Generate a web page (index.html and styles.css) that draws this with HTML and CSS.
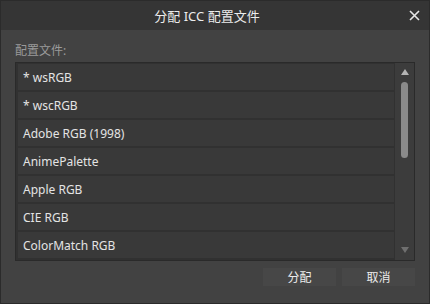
FILE: index.html
```html
<!DOCTYPE html>
<html lang="zh-CN">
<head>
    <meta charset="UTF-8">
    <title>分配 ICC 配置文件</title>
    <link rel="stylesheet" href="styles.css">
</head>
<body>
    <div class="dialog">
        <header class="titlebar">
            <h1>分配 ICC 配置文件</h1>
            <span class="close">
                <svg width="11" height="11" viewBox="0 0 11 11"><path d="M1 1L10 10M10 1L1 10" stroke="#e6e6e6" stroke-width="1.6"/></svg>
            </span>
        </header>

        <div class="content">
            <div class="label">配置文件:</div>
            <div class="list">
                <div class="rows">
                    <div class="row">* wsRGB</div>
                    <div class="row">* wscRGB</div>
                    <div class="row">Adobe RGB (1998)</div>
                    <div class="row">AnimePalette</div>
                    <div class="row">Apple RGB</div>
                    <div class="row">CIE RGB</div>
                    <div class="row">ColorMatch RGB</div>
                </div>
                <div class="scrollbar">
                    <span class="arrow up"></span>
                    <span class="thumb"></span>
                    <span class="arrow down"></span>
                </div>
            </div>
            <div class="buttons">
                <button class="btn">分配</button>
                <button class="btn">取消</button>
            </div>
        </div>
    </div>
</body>
</html>
```

FILE: styles.css
```css
body {
    margin: 0;
    background: #2b2b2b;
    font-family: "Noto Sans", "Noto Sans CJK SC", sans-serif;
}
.dialog {
    width: 428px;
    height: 302px;
    border: 1px solid #2b2b2b;
    background-color: #424242;
    display: flex;
    flex-direction: column;
}
.titlebar {
    height: 29px;
    padding-right: 16px;
    background-color: #353535;
    display: flex;
    align-items: center;
    justify-content: center;
    position: relative;
}
.titlebar h1 {
    margin: 0;
    font-size: 13px;
    font-weight: normal;
    color: #ececec;
}
.close {
    position: absolute;
    right: 9px;
    top: 9px;
    width: 11px;
    height: 11px;
    display: flex;
}
.content {
    padding: 12px 14px 0 14px;
    display: flex;
    flex-direction: column;
}
.label {
    font-size: 12px;
    color: #9a9a9a;
    line-height: 18px;
    height: 20px;
}
.list {
    height: 197px;
    border: 1px solid #2a2a2a;
    background-color: #313131;
    display: flex;
    overflow: hidden;
}
.rows {
    flex: 1;
    padding: 1px 1px 0 2px;
    display: flex;
    flex-direction: column;
    gap: 2px;
}
.row {
    flex: none;
    height: 26px;
    line-height: 27px;
    padding-left: 5px;
    background-color: #393939;
    color: #e4e4e4;
    font-size: 12px;
}
.scrollbar {
    width: 19px;
    background-color: #3c3c3c;
    display: flex;
    flex-direction: column;
    align-items: center;
    padding-top: 6px;
}
.arrow {
    width: 0;
    height: 0;
    border-left: 4px solid transparent;
    border-right: 4px solid transparent;
}
.arrow.up {
    border-bottom: 6px solid #b4b4b4;
}
.thumb {
    width: 7px;
    height: 76px;
    margin-top: 7px;
    border-radius: 4px;
    background-color: #8a8a8a;
}
.arrow.down {
    margin-top: auto;
    margin-bottom: 7px;
    border-top: 6px solid #6f6f6f;
}
.buttons {
    display: flex;
    justify-content: flex-end;
    gap: 6px;
    margin-top: 7px;
}
.btn {
    width: 73px;
    height: 18px;
    padding: 0;
    border: none;
    background-color: #474747;
    color: #ececec;
    font-family: "Noto Sans CJK SC", sans-serif;
    font-size: 12px;
    line-height: 18px;
}
```
